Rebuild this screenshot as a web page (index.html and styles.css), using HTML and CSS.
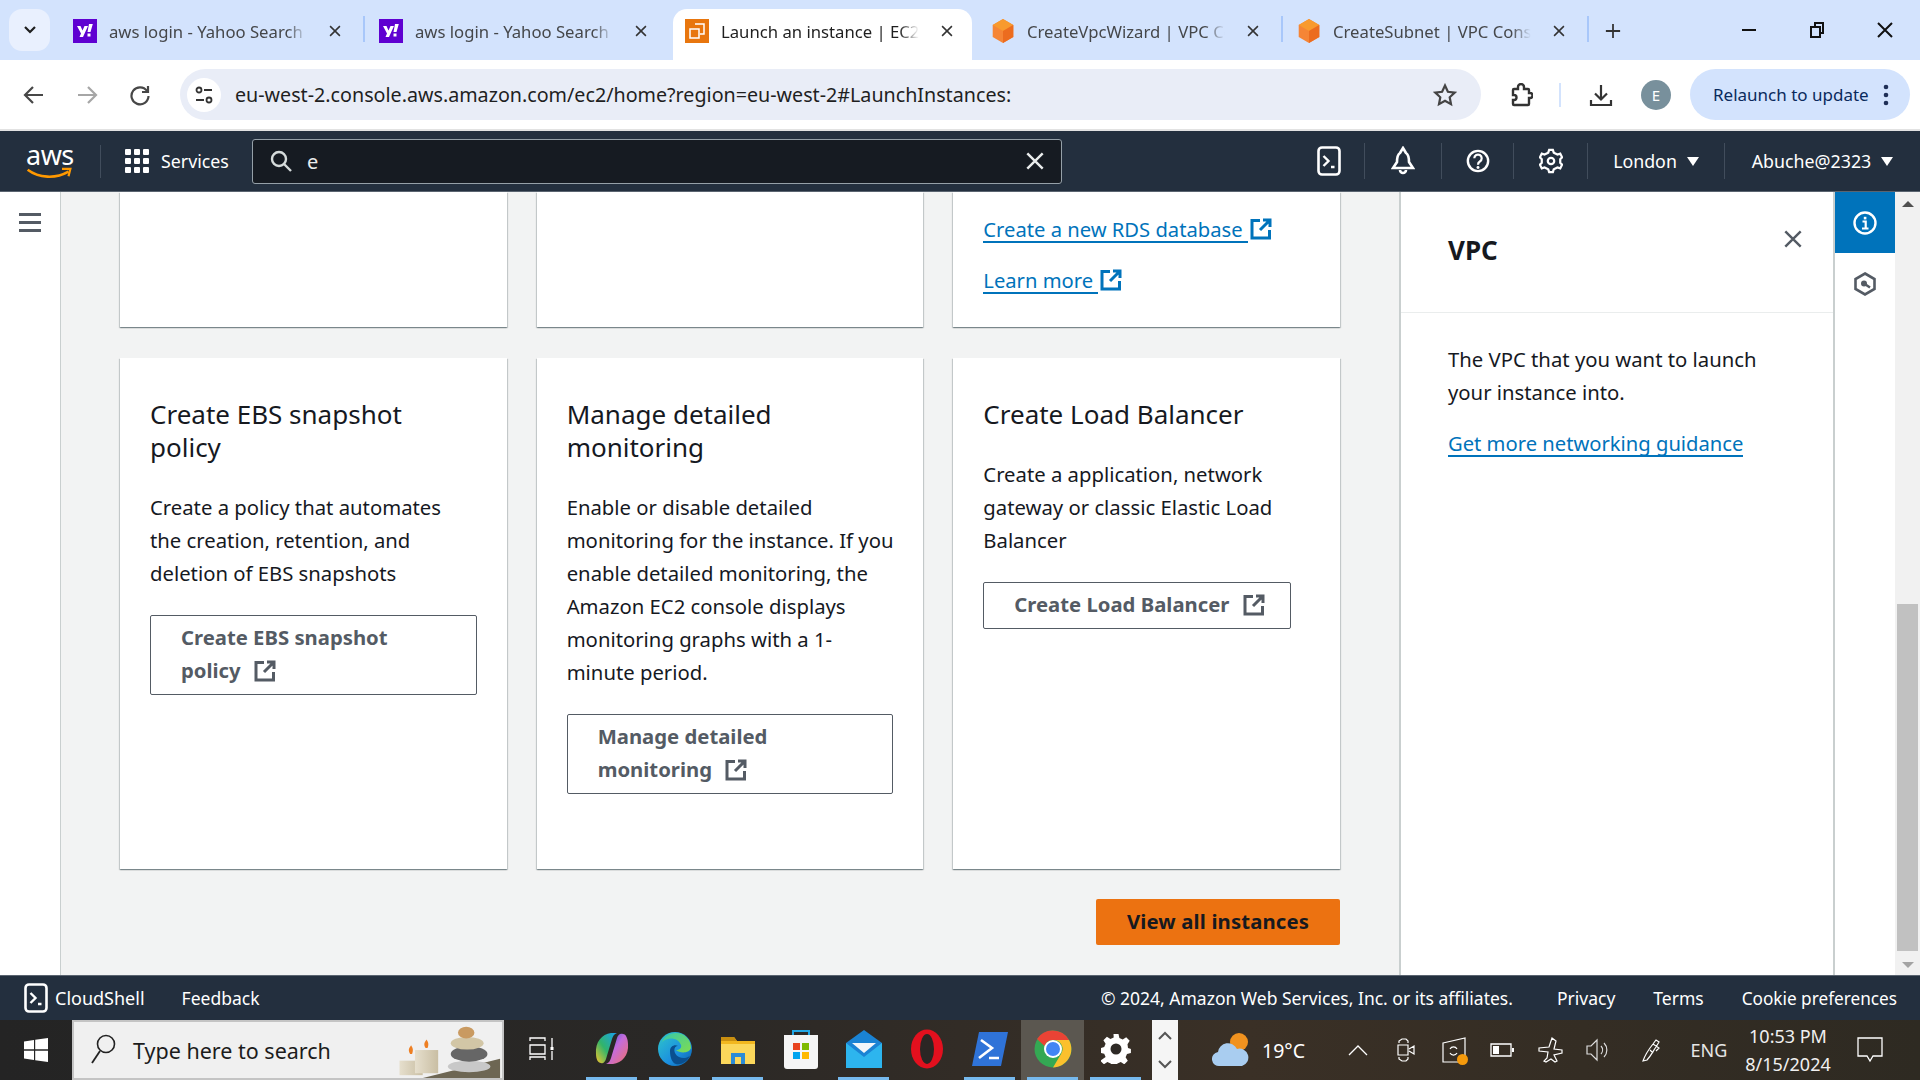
FILE: index.html
```html
<!DOCTYPE html>
<html lang="en">
<head>
<meta charset="utf-8">
<title>Launch an instance | EC2</title>
<link rel="stylesheet" href="styles.css">
</head>
<body>
<svg class="defs" width="0" height="0">
  <defs>
    <symbol id="ext" viewBox="0 0 22 22"><path d="M10 2.500H2v17.500h17.500V12M13 2h7v7M20 2 10 12" fill="none" stroke="currentColor" stroke-width="3"/></symbol>
    <symbol id="x" viewBox="0 0 20 20"><path d="M3 3l14 14M17 3 3 17" fill="none" stroke="currentColor" stroke-width="2.200"/></symbol>
    <symbol id="shell" viewBox="0 0 24 30"><rect x="1.500" y="1.500" width="21" height="27" rx="3.500" fill="none" stroke="currentColor" stroke-width="2.600"/><path d="M6.500 10l5 5-5 5M14 21h3.500" fill="none" stroke="currentColor" stroke-width="2.400"/></symbol>
    <symbol id="cube" viewBox="0 0 24 28"><path d="M12 0 24 7v14l-12 7L0 21V7z" fill="#f58536"/><path d="M12 0 24 7 12 14 0 7z" fill="#f89a2e"/><path d="M12 14v14l12-7V7z" fill="#ec6c1f"/></symbol>
    <symbol id="yahoo" viewBox="0 0 24 24"><rect width="24" height="24" fill="#5f01d1"/><path d="M4 7h3.500l2 4.500L11.500 7H15l-5 11H6.500l1.500-3.500zM16 5h3.800l-2.300 8h-3zM14.500 14.500h3v3h-3z" fill="#fff"/></symbol>
    <linearGradient id="g-edge" x1="0" y1="0" x2="1" y2="1"><stop offset="0" stop-color="#2fc7c9"/><stop offset=".6" stop-color="#1b8fe0"/><stop offset="1" stop-color="#0b5fa8"/></linearGradient>
    <linearGradient id="g-edge2" x1="0" y1="0" x2="1" y2="1"><stop offset="0" stop-color="#37c8ab"/><stop offset="1" stop-color="#7fdc4f"/></linearGradient>
    <linearGradient id="g-co1" x1="0" y1="1" x2="1" y2="0"><stop offset="0" stop-color="#f7c62c"/><stop offset=".45" stop-color="#31b46a"/><stop offset="1" stop-color="#18a0f0"/></linearGradient>
    <linearGradient id="g-co2" x1="0" y1="0" x2="1" y2="1"><stop offset="0" stop-color="#2a50d8"/><stop offset=".45" stop-color="#c46cdc"/><stop offset="1" stop-color="#f0706a"/></linearGradient>
    <linearGradient id="g-stack" x1="0" y1="0" x2="1" y2="0"><stop offset="0" stop-color="#e6dfcd"/><stop offset="1" stop-color="#c9bea3"/></linearGradient>
  </defs>
</svg>

<header class="tabstrip">
  <button class="tab-menu"><svg width="14" height="10" viewBox="0 0 14 10"><path d="M2 2l5 5 5-5" fill="none" stroke="#1f1f1f" stroke-width="2.200"/></svg></button>
  <div class="tab divided"><svg class="favicon"><use href="#yahoo"/></svg><span class="tab-title">aws login - Yahoo Search</span><svg class="tab-x"><use href="#x"/></svg></div>
  <div class="tab"><svg class="favicon"><use href="#yahoo"/></svg><span class="tab-title">aws login - Yahoo Search</span><svg class="tab-x"><use href="#x"/></svg></div>
  <div class="tab active"><svg class="favicon" viewBox="0 0 24 24"><rect width="24" height="24" fill="#e8760e"/><path d="M10 5h9v10h-4M5 10h9v9H5z" fill="none" stroke="#fff" stroke-width="1.500"/></svg><span class="tab-title">Launch an instance | EC2</span><svg class="tab-x"><use href="#x"/></svg></div>
  <div class="tab divided"><svg class="favicon"><use href="#cube"/></svg><span class="tab-title">CreateVpcWizard | VPC Console</span><svg class="tab-x"><use href="#x"/></svg></div>
  <div class="tab divided"><svg class="favicon"><use href="#cube"/></svg><span class="tab-title">CreateSubnet | VPC Console</span><svg class="tab-x"><use href="#x"/></svg></div>
  <svg class="tab-plus" viewBox="0 0 18 18"><path d="M9 1v16M1 9h16" stroke="#333" stroke-width="2"/></svg>
  <div class="win-controls">
    <svg viewBox="0 0 18 18"><path d="M2 9h14" stroke="#111" stroke-width="2"/></svg>
    <svg viewBox="0 0 18 18"><path d="M3 6h9v10H3zM7 6V2h8v10h-3" fill="none" stroke="#111" stroke-width="2"/></svg>
    <svg viewBox="0 0 18 18"><path d="M2 2l14 14M16 2 2 16" stroke="#111" stroke-width="2"/></svg>
  </div>
</header>

<div class="toolbar">
  <svg class="tb-icon" viewBox="0 0 22 22"><path d="M20 11H3M10 3l-8 8 8 8" fill="none" stroke="#474747" stroke-width="2.200"/></svg>
  <svg class="tb-icon" viewBox="0 0 22 22"><path d="M2 11h17M12 3l8 8-8 8" fill="none" stroke="#a6a6a6" stroke-width="2.200"/></svg>
  <svg class="tb-icon" viewBox="0 0 22 22"><path d="M18 7a8.500 8.500 0 1 0 1.500 5M19 2v6h-6" fill="none" stroke="#474747" stroke-width="2.200"/></svg>
  <div class="omnibox">
    <span class="site-chip"><svg width="20" height="20" viewBox="0 0 20 20"><circle cx="5" cy="5" r="2.500" fill="none" stroke="#333" stroke-width="1.800"/><path d="M10 5h8M2 15h8" stroke="#333" stroke-width="2"/><circle cx="15" cy="15" r="2.500" fill="none" stroke="#333" stroke-width="1.800"/></svg></span>
    <span class="url">eu-west-2.console.aws.amazon.com/ec2/home?region=eu-west-2#LaunchInstances:</span>
    <svg class="star" viewBox="0 0 24 24"><path d="M12 2.500l2.900 6.300 6.800.8-5 4.700 1.300 6.800-6-3.400-6 3.400 1.300-6.800-5-4.700 6.800-.8z" fill="none" stroke="#444" stroke-width="2.200"/></svg>
  </div>
  <svg class="ext-puzzle" viewBox="0 0 24 24"><path d="M5 6h4V4a3 3 0 0 1 6 0v2h4a1 1 0 0 1 1 1v3h1a2.500 2.500 0 0 1 0 5h-1v6a1 1 0 0 1-1 1H5a1 1 0 0 1-1-1v-4h1a2.500 2.500 0 0 0 0-5H4V7a1 1 0 0 1 1-1z" fill="none" stroke="#333" stroke-width="2.400"/></svg>
  <span class="tb-divider"></span>
  <svg class="download" viewBox="0 0 24 24"><path d="M12 2v14M6 10.500l6 6 6-6M2 17v5h20v-5" fill="none" stroke="#333" stroke-width="2.200"/></svg>
  <span class="avatar">E</span>
  <div class="relaunch"><span>Relaunch to update</span><svg width="6" height="22" viewBox="0 0 6 22"><circle cx="3" cy="3" r="2.300" fill="#1f2f57"/><circle cx="3" cy="11" r="2.300" fill="#1f2f57"/><circle cx="3" cy="19" r="2.300" fill="#1f2f57"/></svg></div>
</div>

<nav class="awsnav">
  <div class="nav-logo">
    <span class="aws-word">aws</span>
    <svg class="aws-smile" viewBox="0 0 48 14"><path d="M1 3c12 9 30 10 44 2" fill="none" stroke="#f90" stroke-width="2.800"/><path d="M38 2l9 0-2 8" fill="none" stroke="#f90" stroke-width="2.400"/></svg>
  </div>
  <div class="nav-services">
    <svg width="24" height="24" viewBox="0 0 24 24" fill="#fff"><rect width="6" height="6" rx="1"/><rect x="9" width="6" height="6" rx="1"/><rect x="18" width="6" height="6" rx="1"/><rect y="9" width="6" height="6" rx="1"/><rect x="9" y="9" width="6" height="6" rx="1"/><rect x="18" y="9" width="6" height="6" rx="1"/><rect y="18" width="6" height="6" rx="1"/><rect x="9" y="18" width="6" height="6" rx="1"/><rect x="18" y="18" width="6" height="6" rx="1"/></svg>
    <span>Services</span>
  </div>
  <div class="nav-search">
    <svg width="22" height="22" viewBox="0 0 22 22"><circle cx="9" cy="9" r="7" fill="none" stroke="#d5dbdb" stroke-width="2.400"/><path d="M14 14l7 7" stroke="#d5dbdb" stroke-width="2.400"/></svg>
    <span class="nav-query">e</span>
    <svg class="nav-clear"><use href="#x"/></svg>
  </div>
  <div class="nav-right">
    <div class="nav-cell first"><svg class="nav-ico"><use href="#shell"/></svg></div>
    <div class="nav-cell w77"><svg class="nav-ico" viewBox="0 0 24 30"><path d="M12 2l3 5c3 2 3 6 3 9l4 6H2l4-6c0-3 0-7 3-9zM9 24a3 3 0 0 0 6 0" fill="none" stroke="#fff" stroke-width="2.600"/></svg></div>
    <div class="nav-cell w72"><svg class="nav-ico" viewBox="0 0 26 30"><circle cx="13" cy="15" r="11" fill="none" stroke="#fff" stroke-width="2.600"/><path d="M9 12a4 4 0 1 1 6 3.500c-1.500 1-2 1.500-2 3.500" fill="none" stroke="#fff" stroke-width="2.400"/><circle cx="13" cy="22" r="1.600" fill="#fff"/></svg></div>
    <div class="nav-cell w74"><svg class="nav-ico" viewBox="0 0 26 30"><path d="M13 3l2 0 1 3 4 2 3-1 2 4-2 2v4l2 2-2 4-3-1-4 2-1 3h-4l-1-3-4-2-3 1-2-4 2-2v-4l-2-2 2-4 3 1 4-2 1-3z" fill="none" stroke="#fff" stroke-width="2.400"/><circle cx="13" cy="15" r="3.500" fill="none" stroke="#fff" stroke-width="2.400"/></svg></div>
    <div class="nav-cell w137 text">London <i class="caret"></i></div>
    <div class="nav-cell w196 text">Abuche@2323 <i class="caret"></i></div>
  </div>
</nav>

<main class="workspace">
  <aside class="leftnav"><span class="burger"><i></i><i></i><i></i></span></aside>

  <section class="content">
    <div class="grid">
      <article class="card short"></article>
      <article class="card short"></article>
      <article class="card short links">
        <a class="link" href="#"><span>Create a new RDS database</span><svg class="ext"><use href="#ext"/></svg></a>
        <a class="link" href="#"><span>Learn more</span><svg class="ext"><use href="#ext"/></svg></a>
      </article>

      <article class="card tall">
        <h3>Create EBS snapshot policy</h3>
        <p>Create a policy that automates the creation, retention, and deletion of EBS snapshots</p>
        <a class="btn wide" href="#">Create EBS snapshot policy <svg class="ext"><use href="#ext"/></svg></a>
      </article>
      <article class="card tall">
        <h3>Manage detailed monitoring</h3>
        <p class="roomy">Enable or disable detailed monitoring for the instance. If you enable detailed monitoring, the Amazon EC2 console displays monitoring graphs with a 1-minute period.</p>
        <a class="btn wide" href="#">Manage detailed monitoring <svg class="ext"><use href="#ext"/></svg></a>
      </article>
      <article class="card tall">
        <h3>Create Load Balancer</h3>
        <p>Create a application, network gateway or classic Elastic Load Balancer</p>
        <a class="btn" href="#">Create Load Balancer <svg class="ext"><use href="#ext"/></svg></a>
      </article>
    </div>
    <div class="actions"><a class="primary" href="#">View all instances</a></div>
  </section>

  <aside class="panel">
    <div class="panel-head"><h2>VPC</h2><svg class="panel-x"><use href="#x"/></svg></div>
    <div class="panel-body">
      <p>The VPC that you want to launch your instance into.</p>
      <a class="panel-link" href="#">Get more networking guidance</a>
    </div>
  </aside>

  <aside class="rail">
    <div class="rail-btn on"><svg width="24" height="24" viewBox="0 0 24 24"><circle cx="12" cy="12" r="10.500" fill="none" stroke="#fff" stroke-width="2.400"/><path d="M9.500 10.500h3.200V17M9 17.500h6.500" fill="none" stroke="#fff" stroke-width="2.200"/><rect x="10.800" y="5.800" width="2.600" height="2.600" fill="#fff"/></svg></div>
    <div class="rail-btn"><svg width="22" height="24" viewBox="0 0 22 24"><path d="M11 1.500l9.500 5.500v10L11 22.500 1.500 17V7z" fill="none" stroke="#545b64" stroke-width="2.600"/><circle cx="10" cy="11.500" r="3" fill="#545b64"/><path d="M10 11.500l6 4" stroke="#545b64" stroke-width="2.400"/></svg></div>
  </aside>

  <div class="scrollbar">
    <i class="arrow up"></i>
    <div class="track"><div class="thumb"></div></div>
    <i class="arrow down"></i>
  </div>
</main>

<footer class="awsfoot">
  <svg class="foot-shell"><use href="#shell"/></svg>
  <span class="foot-shell-label">CloudShell</span>
  <span class="foot-feedback">Feedback</span>
  <span class="foot-spacer"></span>
  <span>© 2024, Amazon Web Services, Inc. or its affiliates.</span>
  <span class="foot-privacy">Privacy</span>
  <span class="foot-gap">Terms</span>
  <span class="foot-gap foot-last">Cookie preferences</span>
</footer>

<div class="taskbar">
  <div class="start"><svg width="24" height="24" viewBox="0 0 24 24" fill="#fff"><path d="M0 3.500 10 2v9.300H0zM11.200 1.800 24 0v11.300H11.200zM0 12.700h10V22L0 20.500zM11.200 12.700H24V24l-12.800-1.800z"/></svg></div>
  <div class="tsearch">
    <svg width="28" height="44" viewBox="0 0 28 44"><circle cx="16" cy="16" r="8.500" fill="none" stroke="#222" stroke-width="1.600"/><path d="M10 23 2 35" stroke="#222" stroke-width="1.800"/></svg>
    <span>Type here to search</span>
    <svg class="tsearch-art" viewBox="0 0 118 60">
      <path d="M30 60 118 38V60z" fill="#6d6653"/>
      <rect x="14" y="40" width="24" height="15" fill="url(#g-stack)"/>
      <rect x="30" y="29" width="24" height="24" fill="url(#g-stack)"/>
      <path d="M25 33c-3-5 0-7 1-9 1 2 3 4 1 9z" fill="#ee7f22"/>
      <path d="M41 27c-3-5 0-7 1-9 1 2 3 4 1 9z" fill="#ee7f22"/>
      <ellipse cx="86" cy="46" rx="22" ry="6" fill="#c8c8c8"/>
      <ellipse cx="86" cy="33" rx="19" ry="8" fill="#666"/>
      <ellipse cx="84" cy="22" rx="17" ry="6.500" fill="#d2c6a6"/>
      <ellipse cx="83" cy="11" rx="8.500" ry="6" fill="#c99a61"/>
    </svg>
  </div>
  <div class="tk taskview"><svg width="26" height="24" viewBox="0 0 26 24"><path d="M1 4V1h15v3M1 8h15v9H1zM1 23v-3h15v3M23 1v9M23 14v9" fill="none" stroke="#fff" stroke-width="1.300"/><rect x="21.500" y="10" width="3" height="3" fill="#fff"/></svg></div>
  <div class="tk bar"><svg width="36" height="34" viewBox="0 0 36 34"><path d="M2 22C1 10 8 2 17 1h6c-3 1-4 3-5 6l-6 20c-1 3-3 5-5 4-3 0-5-4-5-9z" fill="url(#g-co1)"/><path d="M34 12c1 11-6 19-15 20h-7c3-1 4-3 5-6l6-20c1-3 3-5 6-4 3 0 5 5 5 10z" fill="url(#g-co2)"/></svg></div>
  <div class="tk bar split"><svg width="36" height="36" viewBox="0 0 36 36"><circle cx="18" cy="18" r="17" fill="url(#g-edge)"/><path d="M34 17c0-9-7-15-15-15C12 2 7 6 5 11c5-5 16-5 19 3 1 3-2 5-5 5 3 3 13 4 15-2z" fill="url(#g-edge2)"/><path d="M13 20c0-5 5-7 8-5-5 0-5 8 1 11 4 2 8 1 11-1-3 6-9 9-14 8-4-1-6-7-6-13z" fill="#0a4f8f"/></svg></div>
  <div class="tk bar split"><svg width="34" height="30" viewBox="0 0 34 30"><path d="M0 3h13l3 4h18v23H0z" fill="#f2b71f"/><path d="M0 3h13l3 4H0z" fill="#c98f10"/><path d="M0 10h34v20H0z" fill="#fbd75b"/><path d="M10 30V19h14v11h-4v-7h-6v7z" fill="#2b8bd6"/></svg></div>
  <div class="tk"><svg width="34" height="40" viewBox="0 0 34 40"><path d="M9 8V2h16v6" fill="none" stroke="#22a7e5" stroke-width="2"/><path d="M0 6h34v31a3 3 0 0 1-3 3H3a3 3 0 0 1-3-3z" fill="#f5f5f5"/><rect x="9" y="14" width="7" height="7" fill="#e8431f"/><rect x="18" y="14" width="7" height="7" fill="#7fba00"/><rect x="9" y="23" width="7" height="7" fill="#00a4ef"/><rect x="18" y="23" width="7" height="7" fill="#ffb900"/></svg></div>
  <div class="tk bar"><svg width="36" height="38" viewBox="0 0 36 38"><path d="M0 13 18 0l18 13v25H0z" fill="#1a83d4"/><path d="M0 13l18 14 18-14v25H0z" fill="#2db5ee"/><path d="M6 13h24l-12 10z" fill="#f2f6fa"/></svg></div>
  <div class="tk"><svg width="34" height="40" viewBox="0 0 34 40"><ellipse cx="17" cy="20" rx="16" ry="19.500" fill="#e3101e"/><ellipse cx="17" cy="20" rx="7" ry="15" fill="#2b2624"/></svg></div>
  <div class="tk bar"><svg width="36" height="34" viewBox="0 0 36 34"><path d="M7 0h29l-7 34H0z" fill="#2f73d8"/><path d="M9 8l11 8-13 10M17 26h10" fill="none" stroke="#fff" stroke-width="2.600"/></svg></div>
  <div class="tk bar hot"><svg width="38" height="38" viewBox="0 0 38 38"><circle cx="19" cy="19" r="18.500" fill="#34a853"/><path d="M19 .5A18.500 18.500 0 0 1 35 10H19A9 9 0 0 0 10.500 16L3 9A18.500 18.500 0 0 1 19 .5z" fill="#ea4335"/><path d="M35 10a18.500 18.500 0 0 1-16 27.500L27 24A9 9 0 0 0 19 10z" fill="#fbc02d"/><circle cx="19" cy="19" r="9" fill="#fff"/><circle cx="19" cy="19" r="7" fill="#4285f4"/></svg></div>
  <div class="tk bar"><svg width="30" height="30" viewBox="0 0 30 30"><path d="M12.500 0h5l.9 4 3.300 1.400 3.500-2.200 3.500 3.500-2.200 3.500L27 14l3 1-.1 .1v4l-3.900.9-1.400 3.300 2.200 3.500-3.500 3.500-3.500-2.200-3.300 1.400-.9 1h-5l-.9-1-3.300-1.400-3.500 2.200-3.500-3.500L4.600 23 3.200 19.700 0 19v-5l3.200-.9L4.600 9.800 2.400 6.300l3.500-3.500 3.500 2.200L12.700 3.600z" fill="#fff"/><circle cx="15" cy="15" r="5.500" fill="#2e2a26"/></svg></div>
  <div class="overflow"><svg width="14" height="10" viewBox="0 0 14 10"><path d="M1 8l6-6 6 6" fill="none" stroke="#555" stroke-width="2"/></svg><svg width="14" height="10" viewBox="0 0 14 10"><path d="M1 2l6 6 6-6" fill="none" stroke="#555" stroke-width="2"/></svg></div>
  <div class="weather">
    <svg width="38" height="36" viewBox="0 0 38 36"><circle cx="27" cy="10" r="9" fill="#f0921f"/><path d="M8 34a7 7 0 0 1-2-14 10 10 0 0 1 19-3 8.500 8.500 0 0 1 5 17z" fill="#a9cdf0"/></svg>
    <span>19°C</span>
  </div>
  <div class="tray">
    <div class="cell"><svg width="20" height="12" viewBox="0 0 20 12"><path d="M1 11l9-9 9 9" fill="none" stroke="#fff" stroke-width="1.300"/></svg></div>
    <div class="cell"><svg width="18" height="24" viewBox="0 0 18 24"><path d="M2 5V3l3-2h4l2 2v2M2 19v2l3 2h4l2-2v-2M1 7h10v10H1zM12 11l5-3v8l-5-3" fill="none" stroke="#fff" stroke-width="1.200"/></svg></div>
    <div class="cell"><span class="tray-dot"><svg width="24" height="26" viewBox="0 0 24 26"><path d="M1 6 23 1v24H1zM8 12a4 4 0 0 1 7 0M8 16a4 4 0 0 0 7 0" fill="none" stroke="#fff" stroke-width="1.200"/></svg><i></i></span></div>
    <div class="cell"><svg width="24" height="14" viewBox="0 0 24 14"><path d="M1 1h20v12H1z" fill="none" stroke="#fff" stroke-width="1.300"/><rect x="3" y="3" width="6" height="8" fill="#fff"/><rect x="22" y="5" width="2" height="4" fill="#fff"/></svg></div>
    <div class="cell"><svg width="26" height="26" viewBox="0 0 26 26"><path d="M15 1l-3 9-10 1 0 3 9 1-1 6 -3 3 2 1 5-3 4 3 2-1-3-6 8-2v-3l-8-1 2-8z" fill="none" stroke="#fff" stroke-width="1.200"/></svg></div>
    <div class="cell"><svg width="24" height="24" viewBox="0 0 24 24"><path d="M1 8h4l6-6v20l-6-6H1zM15 8a6 6 0 0 1 0 8M18 5a10 10 0 0 1 0 14" fill="none" stroke="#ddd" stroke-width="1.200"/></svg></div>
    <div class="cell w60"><svg width="22" height="26" viewBox="0 0 22 26"><path d="M2 24c2-6 6-12 10-17l3-4 3 2-3 5c-3 4-5 9-9 13zM12 7l6 4-3 3M9 13l3 3" fill="none" stroke="#fff" stroke-width="1.200"/></svg></div>
    <div class="cell w54 eng">ENG</div>
    <div class="cell w104 clock"><span>10:53 PM</span><span>8/15/2024</span></div>
    <div class="cell w60"><svg width="26" height="26" viewBox="0 0 26 26"><path d="M1 1h24v18h-9l-3 5-3-5H1z" fill="none" stroke="#fff" stroke-width="1.300"/></svg></div>
  </div>
</div>
</body>
</html>
```

FILE: styles.css
```css
* { box-sizing: border-box; }
html, body { margin: 0; height: 100%; }
body {
  width: 1920px; height: 1080px; overflow: hidden;
  display: flex; flex-direction: column;
  font-family: "Noto Sans", "Open Sans", sans-serif;
  color: #16191f; background: #fff;
}
.defs { position: absolute; }
a { color: inherit; text-decoration: none; }
h2, h3, p { margin: 0; font-weight: 400; }

/* tabs */
.tabstrip { height: 60px; flex: none; background: #d3e3fd; display: flex; align-items: flex-end; padding-left: 9px; }
.tab-menu { width: 41px; height: 42px; margin-bottom: 9px; border: 0; border-radius: 13px; background: #e9f0fe; padding: 0; display: flex; align-items: center; justify-content: center; margin-right: 11px; }
.tab { width: 306px; height: 51px; display: flex; align-items: center; padding: 0 0 7px 12px; position: relative; font-size: 16.700px; color: #45474a; }
.tab.divided::after { content: ""; position: absolute; right: 2px; top: 7px; height: 26px; width: 2px; background: #a8c7fa; }
.tab.active { background: #fff; color: #1f1f1f; border-radius: 14px 14px 0 0; width: 299px; margin-right: 7px; }
.favicon { width: 24px; height: 24px; flex: none; }
.tab-title { width: 198px; margin-left: 12px; white-space: nowrap; overflow: hidden; -webkit-mask-image: linear-gradient(90deg, #000 90%, transparent); mask-image: linear-gradient(90deg, #000 90%, transparent); }
.tab-x { width: 14px; height: 14px; margin-left: 21px; color: #333; flex: none; }
.tab-plus { width: 16px; height: 16px; margin: 0 0 21px 14px; }
.win-controls { margin-left: auto; display: flex; gap: 50px; padding: 0 26px 21px 0; }
.win-controls svg { width: 18px; height: 18px; }

/* toolbar */
.toolbar { height: 71px; flex: none; background: #fff; border-bottom: 2px solid #e2e2e2; display: flex; align-items: center; padding: 0 10px 0 23px; }
.tb-icon { width: 22px; height: 22px; margin-right: 31px; flex: none; }
.omnibox { width: 1301px; height: 51px; margin-left: -2px; background: #e9edf7; border-radius: 26px; display: flex; align-items: center; padding: 0 24px 0 7px; flex: none; }
.site-chip { width: 34px; height: 34px; border-radius: 50%; background: #fff; display: flex; align-items: center; justify-content: center; flex: none; }
.url { margin-left: 14px; font-size: 19.700px; color: #1f1f1f; white-space: nowrap; }
.star { width: 24px; height: 24px; margin-left: auto; }
.ext-puzzle { width: 24px; height: 24px; margin-left: 28px; flex: none; }
.tb-divider { width: 2px; height: 24px; background: #d3e3fd; margin-left: 26px; flex: none; }
.download { width: 24px; height: 24px; margin-left: 28px; flex: none; }
.avatar { width: 30px; height: 30px; border-radius: 50%; background: #78909c; color: #fff; font-size: 15px; display: flex; align-items: center; justify-content: center; margin-left: 28px; flex: none; }
.relaunch { width: 220px; height: 51px; margin-left: 19px; border-radius: 26px; background: #d3e3fd; color: #0a2a5c; font-size: 17px; display: flex; align-items: center; justify-content: space-between; padding: 0 21px 0 23px; flex: none; }

/* aws nav */
.awsnav { height: 61px; flex: none; background: #232f3e; border-bottom: 1px solid #5a6470; color: #fff; display: flex; align-items: center; font-size: 17.800px; }
.nav-logo { width: 101px; height: 33px; border-right: 1px solid #414d5c; position: relative; flex: none; }
.aws-word { position: absolute; left: 26px; top: -7px; font-size: 27px; line-height: 34px; letter-spacing: -.5px; }
.aws-smile { position: absolute; left: 26px; top: 22px; width: 46px; height: 13px; }
.nav-services { width: 151px; display: flex; align-items: center; gap: 12px; padding-left: 24px; flex: none; }
.nav-search { width: 810px; height: 45px; background: #161b22; border: 1px solid #95a0a8; border-radius: 3px; display: flex; align-items: center; padding: 0 15px 0 17px; flex: none; }
.nav-query { margin-left: 15px; font-size: 20px; color: #eaeded; }
.nav-clear { width: 22px; height: 22px; margin-left: auto; color: #eaeded; }
.nav-right { display: flex; margin-left: auto; align-items: center; }
.nav-cell { height: 36px; display: flex; align-items: center; justify-content: center; border-left: 1px solid #414d5c; flex: none; }
.nav-cell.first { border-left: 0; width: 64px; padding-right: 7px; }
.w77 { width: 77px; } .w72 { width: 72px; } .w74 { width: 74px; } .w137 { width: 137px; } .w196 { width: 196px; }
.nav-ico { width: 24px; height: 30px; }
.nav-cell.text { gap: 8px; }
.caret { width: 0; height: 0; border-left: 6px solid transparent; border-right: 6px solid transparent; border-top: 9px solid #fff; margin-left: 2px; }

/* workspace */
.workspace { flex: 1; display: flex; min-height: 0; background: #f2f3f3; }
.leftnav { width: 61px; background: #fff; border-right: 1px solid #c9cfcf; flex: none; padding: 21px 0 0 19px; }
.burger { display: flex; flex-direction: column; gap: 5px; width: 22px; }
.burger i { height: 3px; background: #545b64; }
.content { width: 1338px; flex: none; padding: 0 59px 0 59px; }
.grid { display: grid; grid-template-columns: repeat(3, 1fr); gap: 31px 30px; }
.card { background: #fff; box-shadow: 0 1px 1px 0 rgba(0,28,36,.3), 1px 1px 1px 0 rgba(0,28,36,.15), -1px 1px 1px 0 rgba(0,28,36,.15); padding: 30px; }
.short { height: 135px; }
.links { display: flex; flex-direction: column; justify-content: flex-end; align-items: flex-start; gap: 25px; padding-bottom: 33px; }
.link { color: #0073bb; font-size: 20.200px; display: flex; align-items: flex-start; }
.link span { line-height: 24px; border-bottom: 2px solid #0073bb; padding-right: 5px; }
.link .ext { margin: 1px 0 0 2px; flex: none; }
.ext { width: 22px; height: 22px; vertical-align: -4px; margin-left: 2px; }
.tall { height: 511px; padding: 40px 30px; font-size: 20.300px; line-height: 33px; }
.tall h3 { font-size: 26px; line-height: 33px; margin-bottom: 27px; }
.tall p { margin-bottom: 25px; }
.tall p.roomy { margin-right: -4px; }
.btn { display: inline-block; border: 1px solid #545b64; border-radius: 2px; padding: 5px 25px 7px 30px; color: #545b64; font-weight: 700; }
.btn.wide { display: block; }
.btn .ext { margin-left: 8px; }
.actions { display: flex; justify-content: flex-end; margin-top: 30px; }
.primary { width: 244px; height: 46px; display: flex; align-items: center; justify-content: center; padding-bottom: 2px; background: #ec7211; border-radius: 2px; font-size: 20.300px; font-weight: 700; color: #16191f; letter-spacing: .15px; }

.panel { width: 434px; flex: none; background: #fff; border-left: 2px solid #c9cfcf; }
.panel-head { height: 121px; border-bottom: 1px solid #eaeded; padding: 41px 29px 0 47px; display: flex; justify-content: space-between; align-items: flex-start; }
.panel-head h2 { font-size: 26px; font-weight: 700; line-height: 34px; }
.panel-x { width: 22px; height: 22px; color: #545b64; margin-top: -5px; }
.panel-body { padding: 30px 47px; font-size: 20.300px; line-height: 33px; }
.panel-body p { margin-bottom: 18px; }
.panel-link { color: #0073bb; border-bottom: 2px solid #0073bb; display: inline-block; line-height: 24px; font-size: 20.200px; }
.rail { width: 62px; flex: none; background: #fff; border-left: 2px solid #c9cfcf; }
.rail-btn { height: 61px; display: flex; align-items: center; justify-content: center; }
.rail-btn.on { background: #0073bb; }
.scrollbar { width: 25px; flex: none; background: #f1f1f1; display: flex; flex-direction: column; align-items: center; padding: 9px 0 7px; }
.track { flex: 1; width: 21px; padding: 397px 0 9px; display: flex; flex-direction: column; }
.thumb { flex: 1; background: #c1c1c1; }
.arrow { width: 0; height: 0; border-left: 6px solid transparent; border-right: 6px solid transparent; }
.arrow.up { border-bottom: 6px solid #505050; }
.arrow.down { border-top: 6px solid #a3a3a3; margin-top: 2px; }

/* footer */
.awsfoot { height: 45px; flex: none; background: #232f3e; border-top: 1px solid #5a6470; color: #fff; font-size: 17.500px; display: flex; align-items: center; padding: 0 23px 0 24px; }
.foot-shell { width: 24px; height: 30px; }
.foot-shell-label { margin-left: 7px; font-size: 18px; }
.foot-feedback { margin-left: 37px; }
.foot-spacer { flex: 1; }
.foot-privacy { margin-left: 44px; }
.foot-gap { margin-left: 38px; }
.foot-last { font-size: 17.200px; }

/* taskbar */
.taskbar { height: 60px; flex: none; background: linear-gradient(90deg, #242424 0%, #2a2826 35%, #3a3026 65%, #2e2a22 100%); display: flex; align-items: stretch; color: #fff; }
.start { width: 72px; display: flex; align-items: center; justify-content: center; flex: none; }
.tsearch { width: 432px; flex: none; background: #f0f0f0; border: 2px solid #c4c4c4; display: flex; align-items: center; padding-left: 16px; position: relative; color: #1c1c1c; font-size: 21.500px; overflow: hidden; }
.tsearch span { margin-left: 15px; }
.tsearch-art { position: absolute; right: 0; top: 0; width: 118px; height: 58px; }
.tk { width: 63px; flex: none; display: flex; align-items: center; justify-content: center; position: relative; padding-bottom: 2px; }
.taskview { width: 76px; }
.tk.bar::after { content: ""; position: absolute; left: 6px; right: 6px; bottom: 0; height: 3px; background: #76b9ed; }
.tk.hot { background: #5b5750; }
.overflow { width: 26px; margin-left: 5px; flex: none; background: #f5f5f5; display: flex; flex-direction: column; align-items: center; justify-content: space-between; padding: 11px 0; }
.weather { display: flex; align-items: center; gap: 12px; margin-left: 34px; font-size: 19.500px; flex: none; }
.tray { display: flex; align-items: stretch; margin-left: auto; width: 586px; flex: none; }
.cell { width: 48px; flex: none; display: flex; align-items: center; justify-content: center; }
.w60 { width: 60px; } .w54 { width: 54px; } .w104 { width: 104px; }
.tray-dot { position: relative; display: flex; }
.tray-dot i { position: absolute; right: -2px; bottom: -2px; width: 11px; height: 11px; border-radius: 50%; background: #f59a0c; }
.eng { font-size: 18px; color: #e6e6e6; }
.clock { flex-direction: column; gap: 4px; font-size: 18px; line-height: 24px; color: #f0f0f0; }
```
